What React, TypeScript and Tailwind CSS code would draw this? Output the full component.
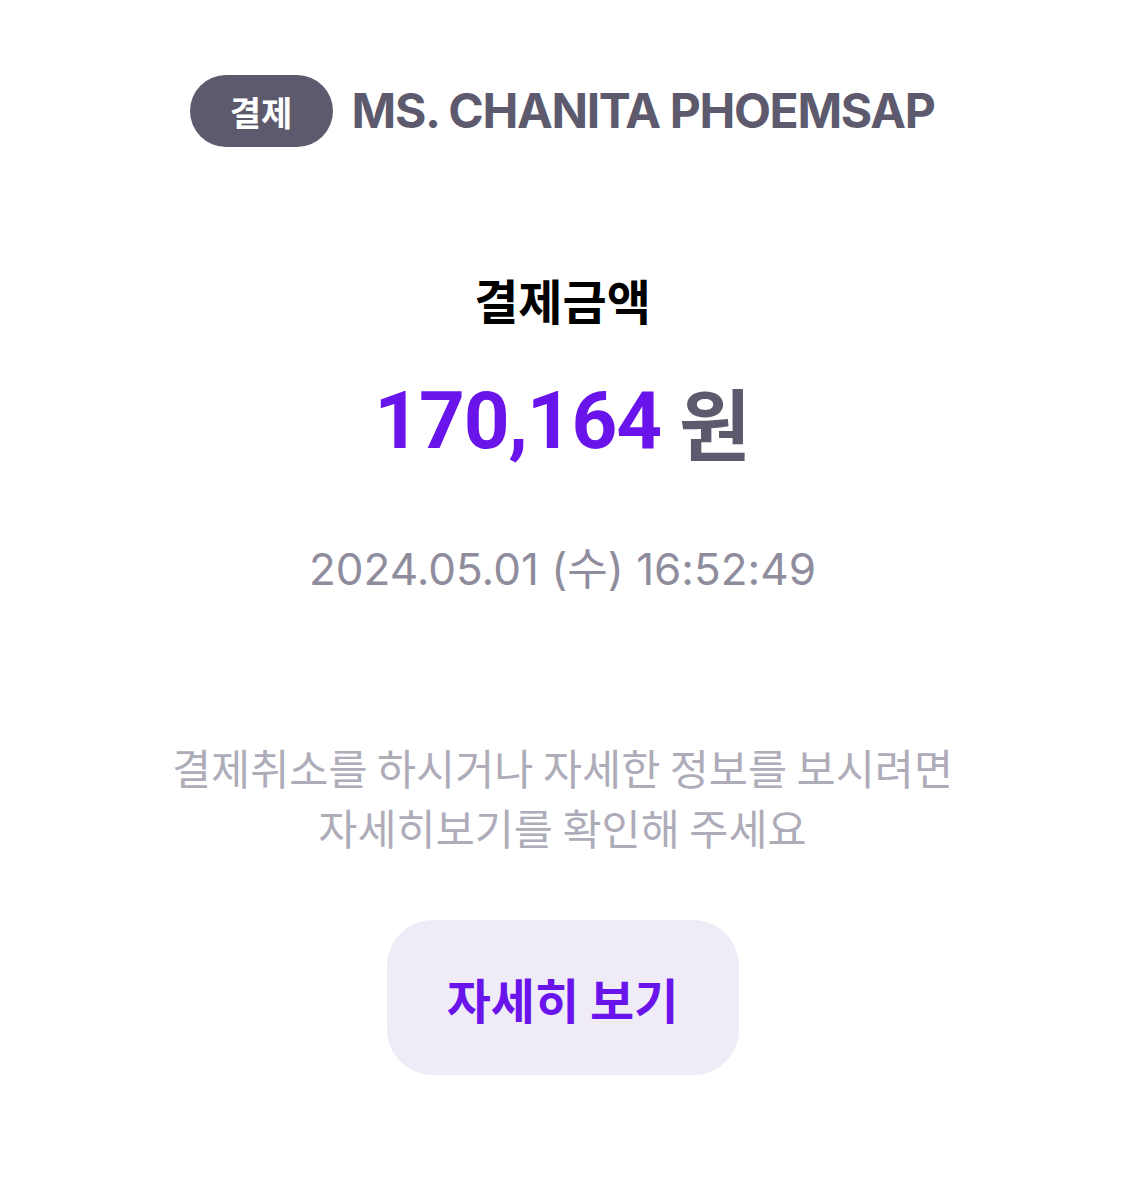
export default function App() {
  const kr = { fontFamily: '"Noto Sans CJK KR", sans-serif' };
  return (
    <div className="min-h-[1178px] w-full bg-white flex flex-col items-center" style={kr}>
      <div className="pt-[75px] flex items-center gap-[19px] -ml-[1px]">
        <span className="h-[72px] w-[143px] rounded-full bg-[#5d5a6d] text-white text-[34px] font-bold flex items-center justify-center">
          결제
        </span>
        <span
          className="text-[48px] font-bold text-[#5d5a6e] tracking-[-1.35px] leading-none"
          style={{ fontFamily: 'Inter, "Noto Sans CJK KR", sans-serif' }}
        >
          MS. CHANITA PHOEMSAP
        </span>
      </div>

      <h2 className="mt-[123px] text-[48px] leading-[58px] font-bold text-black">결제금액</h2>

      <div className="mt-[45px] h-[96px] flex items-center gap-[18px] font-bold">
        <span
          className="text-[80px] leading-[96px] text-[#6a14ec] tracking-[-1.2px]"
          style={{ fontFamily: 'Roboto, sans-serif' }}
        >
          170,164
        </span>
        <span className="text-[78px] leading-[96px] text-[#5d5a6e]">원</span>
      </div>

      <p
        className="mt-[74px] text-[44px] leading-[52px] text-[#8f8d9d]"
        style={{ fontFamily: 'Inter, "Noto Sans CJK KR", sans-serif' }}
      >
        2024.05.01 (수) 16:52:49
      </p>

      <p className="mt-[142px] text-[42.5px] leading-[60px] text-[#aeacb9] text-center">
        결제취소를 하시거나 자세한 정보를 보시려면
        <br />
        자세히보기를 확인해 주세요
      </p>

      <button className="mt-[63px] h-[155px] w-[352px] rounded-[46px] bg-[#efecf7] text-[48px] font-bold text-[#6a14ec] flex items-center justify-center">
        자세히 보기
      </button>
    </div>
  );
}
